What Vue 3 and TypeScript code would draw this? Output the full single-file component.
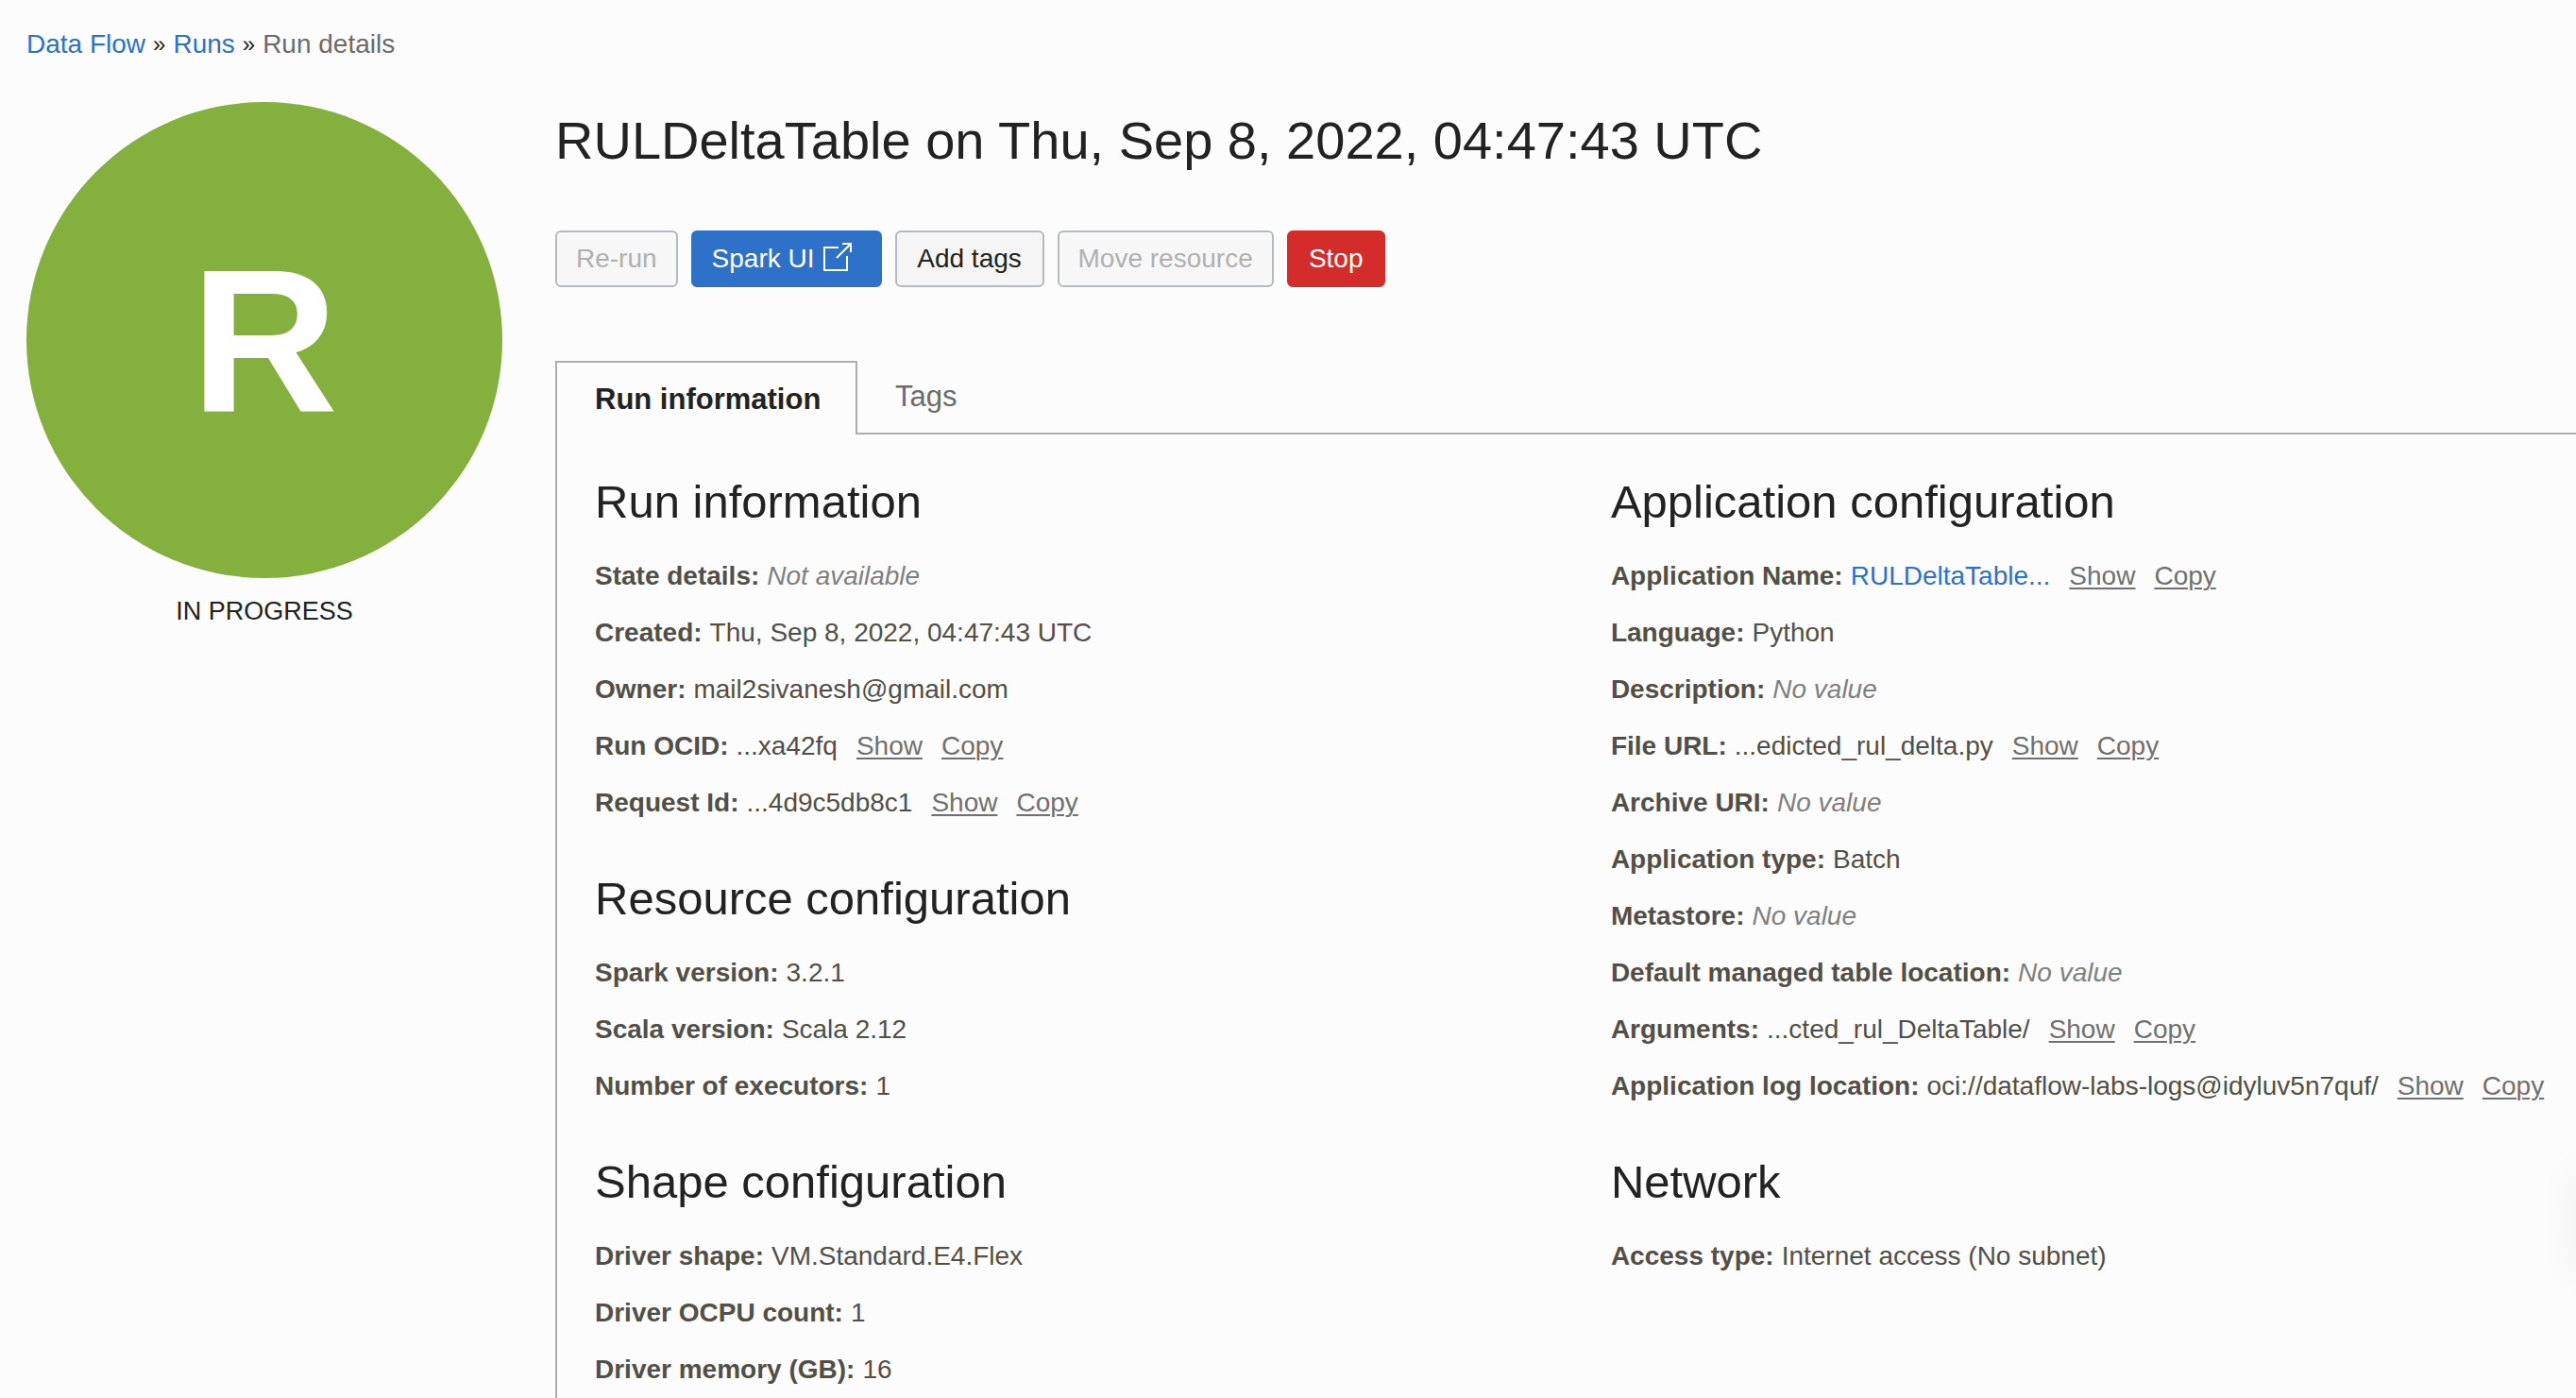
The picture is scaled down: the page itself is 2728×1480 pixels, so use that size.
<script setup lang="ts">
interface Field {
  label: string
  value: string
  kind?: 'link' | 'empty'
  actions?: boolean
}

interface Section {
  title: string
  fields: Field[]
}

const columns: Section[][] = [
  [
    {
      title: 'Run information',
      fields: [
        { label: 'State details:', value: 'Not available', kind: 'empty' },
        { label: 'Created:', value: 'Thu, Sep 8, 2022, 04:47:43 UTC' },
        { label: 'Owner:', value: 'mail2sivanesh@gmail.com' },
        { label: 'Run OCID:', value: '...xa42fq', actions: true },
        { label: 'Request Id:', value: '...4d9c5db8c1', actions: true },
      ],
    },
    {
      title: 'Resource configuration',
      fields: [
        { label: 'Spark version:', value: '3.2.1' },
        { label: 'Scala version:', value: 'Scala 2.12' },
        { label: 'Number of executors:', value: '1' },
      ],
    },
    {
      title: 'Shape configuration',
      fields: [
        { label: 'Driver shape:', value: 'VM.Standard.E4.Flex' },
        { label: 'Driver OCPU count:', value: '1' },
        { label: 'Driver memory (GB):', value: '16' },
      ],
    },
  ],
  [
    {
      title: 'Application configuration',
      fields: [
        { label: 'Application Name:', value: 'RULDeltaTable...', kind: 'link', actions: true },
        { label: 'Language:', value: 'Python' },
        { label: 'Description:', value: 'No value', kind: 'empty' },
        { label: 'File URL:', value: '...edicted_rul_delta.py', actions: true },
        { label: 'Archive URI:', value: 'No value', kind: 'empty' },
        { label: 'Application type:', value: 'Batch' },
        { label: 'Metastore:', value: 'No value', kind: 'empty' },
        { label: 'Default managed table location:', value: 'No value', kind: 'empty' },
        { label: 'Arguments:', value: '...cted_rul_DeltaTable/', actions: true },
        { label: 'Application log location:', value: 'oci://dataflow-labs-logs@idyluv5n7quf/', actions: true },
      ],
    },
    {
      title: 'Network',
      fields: [{ label: 'Access type:', value: 'Internet access (No subnet)' }],
    },
  ],
]
</script>

<template>
  <div class="page">
    <nav class="breadcrumb" aria-label="Breadcrumb">
      <a href="#">Data Flow</a>
      <span class="separator" aria-hidden="true">»</span>
      <a href="#">Runs</a>
      <span class="separator" aria-hidden="true">»</span>
      <span class="current">Run details</span>
    </nav>

    <div class="layout">
      <aside class="status">
        <div class="badge">R</div>
        <div class="state">IN PROGRESS</div>
      </aside>

      <main class="main">
        <h1>RULDeltaTable on Thu, Sep 8, 2022, 04:47:43 UTC</h1>

        <div class="toolbar">
          <button type="button" class="btn" disabled>Re-run</button>
          <button type="button" class="btn primary">
            Spark UI
            <svg class="external" width="32" height="36" viewBox="0 0 32 36" aria-hidden="true">
              <path d="M17 6H2V30H26V15M21 2H30V11M30 2L15 17" fill="none" stroke="currentColor" stroke-width="2" />
            </svg>
          </button>
          <button type="button" class="btn add-tags">Add tags</button>
          <button type="button" class="btn" disabled>Move resource</button>
          <button type="button" class="btn danger">Stop</button>
        </div>

        <div class="tabs" role="tablist">
          <button type="button" class="tab active" role="tab" aria-selected="true">Run information</button>
          <button type="button" class="tab" role="tab" aria-selected="false">Tags</button>
        </div>

        <div class="panel" role="tabpanel">
          <div v-for="(sections, index) in columns" :key="index" class="column">
            <section v-for="section in sections" :key="section.title">
              <h2>{{ section.title }}</h2>
              <dl>
                <div v-for="field in section.fields" :key="field.label" class="row">
                  <dt>{{ field.label }}</dt>
                  <dd :class="{ empty: field.kind === 'empty' }">
                    <a v-if="field.kind === 'link'" href="#">{{ field.value }}</a>
                    <template v-else>{{ field.value }}</template>
                  </dd>
                  <dd v-if="field.actions" class="actions">
                    <a href="#">Show</a>
                    <a href="#">Copy</a>
                  </dd>
                </div>
              </dl>
            </section>
          </div>
        </div>
      </main>
    </div>

    <div class="launcher" aria-hidden="true"></div>
  </div>
</template>

<style>
body {
  margin: 0;
  background: #fcfcfc;
}
</style>

<style scoped>
.page {
  box-sizing: border-box;
  min-height: 100vh;
  display: flex;
  flex-direction: column;
  padding: 26px 0 0 28px;
  overflow: hidden;
  background: #fcfcfc;
  color: #222;
  font-family: "Helvetica Neue", "Liberation Sans", Arial, sans-serif;
  font-size: 28px;
}

a {
  color: #2d71c8;
  text-decoration: none;
}

.breadcrumb {
  display: flex;
  gap: 8px;
  line-height: 42px;
  margin-bottom: 40px;
}

.separator {
  font-size: 24px;
}

.current {
  color: #6b6b6b;
}

.layout {
  display: flex;
  flex: 1;
  gap: 56px;
}

.status {
  flex: none;
  width: 504px;
  text-align: center;
}

.badge {
  height: 504px;
  border-radius: 50%;
  background: #84b13d;
  color: #fff;
  font-size: 216px;
  font-weight: bold;
  line-height: 504px;
}

.state {
  margin-top: 14px;
  font-size: 27px;
  line-height: 42px;
}

.main {
  flex: 1;
  min-width: 0;
  display: flex;
  flex-direction: column;
}

h1 {
  margin: 0 0 54px;
  font-size: 56px;
  font-weight: normal;
  line-height: 82px;
}

.toolbar {
  display: flex;
  gap: 14px;
  margin-bottom: 78px;
}

.btn {
  display: flex;
  align-items: center;
  justify-content: center;
  height: 60px;
  padding: 0 20px;
  border: 2px solid #b4bac0;
  border-radius: 6px;
  background: #f5f5f5;
  color: #222;
  font: inherit;
  white-space: nowrap;
}

.btn:disabled {
  background: #f7f7f7;
  color: #b0b0b0;
}

.primary {
  border-color: #2d71c8;
  background: #2d71c8;
  color: #fff;
}

.add-tags {
  min-width: 158px;
}

.danger {
  min-width: 104px;
  border-color: #d32c2b;
  background: #d32c2b;
  color: #fff;
}

.external {
  margin: 0 9px 0 8px;
}

.tabs {
  display: flex;
}

.tabs::after {
  content: "";
  flex: 1;
  border-bottom: 2px solid #adadad;
}

.tab {
  height: 78px;
  padding: 0 40px;
  border: 0 solid #adadad;
  border-bottom-width: 2px;
  background: none;
  color: #6b6b6b;
  font: inherit;
  font-size: 31px;
}

.tab.active {
  width: 320px;
  padding: 2px 0 0 40px;
  border-width: 2px 2px 0;
  color: #222;
  font-weight: bold;
  text-align: left;
}

.panel {
  flex: 1;
  display: grid;
  grid-template-columns: minmax(0, 20fr) minmax(0, 19fr);
  padding: 40px 0 0 40px;
  border-left: 2px solid #adadad;
}

.column {
  display: flex;
  flex-direction: column;
  gap: 40px;
}

h2 {
  margin: 0 0 18px;
  font-size: 49px;
  font-weight: normal;
  line-height: 62px;
}

dl {
  margin: 0;
}

.row {
  display: flex;
  gap: 8px;
  color: #524f49;
  line-height: 60px;
  white-space: nowrap;
}

dt {
  font-weight: bold;
}

dd {
  margin: 0;
}

.empty {
  color: #808080;
  font-style: italic;
}

.actions {
  display: flex;
  gap: 20px;
  margin-left: 12px;
}

.actions a {
  color: #707070;
  text-decoration: underline;
  text-decoration-thickness: 2px;
  text-underline-offset: 3px;
}

/* Docked help launcher: only its shadow reaches into the page */
.launcher {
  position: fixed;
  right: -60px;
  bottom: 130px;
  width: 60px;
  height: 110px;
  border-radius: 12px;
  box-shadow: 0 0 44px rgba(0, 0, 0, 0.06);
}
</style>
